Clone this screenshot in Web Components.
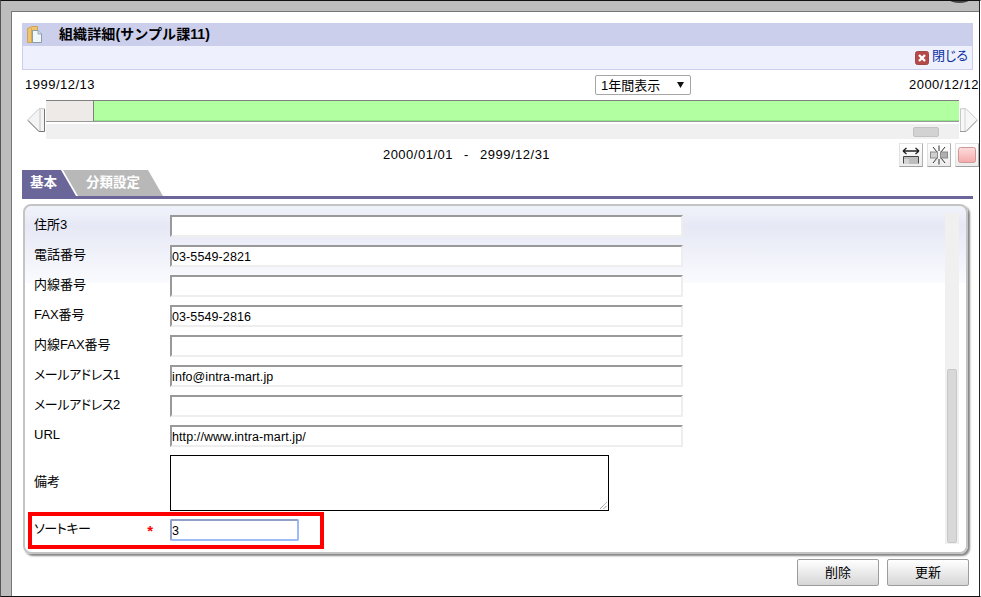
<!DOCTYPE html>
<html lang="ja">
<head>
<meta charset="utf-8">
<title>組織詳細</title>
<style>
  html, body { margin: 0; padding: 0; background: #fff; }
  body {
    font-family: "Liberation Sans", "Noto Sans CJK JP", sans-serif;
    font-size: 13px;
    color: #000;
  }
</style>
</head>
<body>

<im-window>
  <im-title-bar heading="組織詳細(サンプル課11)">閉じる</im-title-bar>
  <im-period-row from="1999/12/13" to="2000/12/12">1年間表示</im-period-row>
  <im-timeline></im-timeline>
  <im-range-row>2000/01/01 - 2999/12/31</im-range-row>
  <im-tabs></im-tabs>
  <im-form-panel>
    <im-field label="住所3"></im-field>
    <im-field label="電話番号">03-5549-2821</im-field>
    <im-field label="内線番号"></im-field>
    <im-field label="FAX番号">03-5549-2816</im-field>
    <im-field label="内線FAX番号"></im-field>
    <im-field label="メールアドレス1" tight>info@intra-mart.jp</im-field>
    <im-field label="メールアドレス2" tight></im-field>
    <im-field label="URL">http://www.intra-mart.jp/</im-field>
    <im-field label="備考" type="area"></im-field>
    <im-field label="ソートキー" type="focus" tight required>3</im-field>
  </im-form-panel>
  <im-actions>
    <im-button>削除</im-button>
    <im-button>更新</im-button>
  </im-actions>
</im-window>

<script>
  (() => {
    const cjk = '"Liberation Sans", "Noto Sans CJK JP", sans-serif';

    function define(name, css, html) {
      customElements.define(name, class extends HTMLElement {
        constructor() {
          super();
          this.root = this.attachShadow({mode: 'open'});
        }
        connectedCallback() {
          const get = (key) => this.getAttribute(key) || '';
          this.root.innerHTML = `<style>${css}</style>${html(get, this)}`;
        }
      });
    }

    define('im-window', `
      :host {
        display: block;
        box-sizing: border-box;
        position: relative;
        width: 981px;
        height: 597px;
        overflow: hidden;
        background: #bdbdbd;
        border-top: 1px solid #111;
        border-left: 1px solid #555;
        border-bottom: 1px solid #111;
        border-right: 1px solid #fff;
      }
      #notch {
        position: absolute;
        top: -4px;
        left: 949px;
        width: 19px;
        height: 6px;
        border-radius: 50%;
        background: #444;
      }
      #edge {
        position: absolute;
        top: 0;
        right: 0;
        bottom: 0;
        width: 1px;
        background: #222;
      }
      #page {
        box-sizing: border-box;
        height: 585px;
        margin: 10px 1px 0 10px;
        padding: 11px 6px 0 10px;
        background: #fff;
        border-top: 1px solid #777;
        border-left: 1px solid #777;
      }
    `, () => `<div id="page"><slot></slot></div><div id="notch"></div><div id="edge"></div>`);

    define('im-title-bar', `
      :host { display: block; }
      #head {
        display: flex;
        align-items: center;
        height: 23px;
        background: #cbcfec;
        padding-left: 5px;
      }
      #head svg { flex: none; width: 15px; height: 17px; }
      h1 {
        margin: 0 0 4px 17px;
        font: bold 14px ${cjk};
        letter-spacing: .1px;
      }
      #tools {
        box-sizing: border-box;
        display: flex;
        justify-content: flex-end;
        align-items: center;
        gap: 3px;
        height: 24px;
        padding-right: 4px;
        background: #eef1fd;
        border: solid #cbcfec;
        border-width: 0 1px 1px;
      }
      #tools svg { width: 14px; height: 14px; }
      a { color: #0a2ea0; font-size: 13px; font-feature-settings: "palt"; margin-bottom: 6px; }
    `, (get) => `
      <div id="head">
        <svg viewBox="0 0 15 17">
          <path d="M.5 2.5 L5 .5 H10.5 V13.5 L5 16.5 H.5 Z" fill="#eec46c" stroke="#c99b45" stroke-width=".8"/>
          <path d="M4.5 2 L4.5 16" stroke="#d6a850" stroke-width="1"/>
          <path d="M5.5 4.5 H11 L14.5 8 V16.5 H5.5 Z" fill="#f2f7fa" stroke="#7f96a3" stroke-width=".9"/>
          <path d="M11 4.5 V8 H14.5" fill="#c9dae3" stroke="#7f96a3" stroke-width=".7"/>
        </svg>
        <h1>${get('heading')}</h1>
      </div>
      <div id="tools">
        <svg viewBox="0 0 14 14">
          <rect x=".5" y=".5" width="13" height="13" rx="2" fill="#b64a4a" stroke="#a04848"/>
          <path d="M4 4 L10 10 M10 4 L4 10" stroke="#fff" stroke-width="2.4"/>
        </svg>
        <a><slot></slot></a>
      </div>`);

    define('im-period-row', `
      :host {
        display: grid;
        grid-template-columns: 573px 96px 1fr;
        align-items: center;
        height: 20px;
        margin: 5px -6px 0 0;
        font-size: 13px;
        letter-spacing: .5px;
      }
      #from { padding: 0 0 2px 3px; }
      #to { padding-bottom: 2px; text-align: right; white-space: nowrap; }
      #pick {
        box-sizing: border-box;
        display: flex;
        justify-content: space-between;
        align-items: center;
        height: 20px;
        padding: 0 6px 0 5px;
        background: #fff;
        border: 1px solid #a6a6a6;
        border-radius: 2px;
        letter-spacing: 0;
        font-feature-settings: "palt";
      }
      #pick span { margin-bottom: 2px; }
      #pick svg { width: 7px; height: 6px; }
    `, (get) => `
      <span id="from">${get('from')}</span>
      <div id="pick"><span><slot></slot></span><svg viewBox="0 0 7 6"><path d="M0 0 H7 L3.5 6 Z" fill="#111"/></svg></div>
      <span id="to">${get('to')}</span>`);

    define('im-timeline', `
      :host {
        display: grid;
        grid-template-columns: 19px 913px 19px;
        height: 39px;
        margin: 5px -6px 0 5px;
      }
      svg { width: 19px; height: 24px; margin-top: 8px; }
      #bars { display: flex; flex-direction: column; gap: 2px; }
      #period {
        display: flex;
        height: 22px;
        box-sizing: border-box;
        border-top: 1px solid #808080;
        border-bottom: 1px solid #999;
      }
      #before { width: 47px; background: #eeeae8; border-right: 1px solid #808080; }
      #now { flex: 1; background: #b2ffa2; border-bottom: 1px solid #8fe585; }
      #scroll {
        display: flex;
        justify-content: flex-end;
        align-items: center;
        height: 15px;
        padding-right: 20px;
        background: #f0f0f0;
      }
      #scroll div {
        width: 26px;
        height: 10px;
        background: #d2d2d2;
        border: 1px solid #c2c2c2;
        box-sizing: border-box;
        border-radius: 2px;
      }
    `, () => `
      <svg viewBox="0 0 19 24">
        <path d="M.7 12 L12 .7 H17.5 V23.5 H12 Z" fill="#f4f4f4" stroke="#c8c8c8"/>
        <path d="M13 1 V23" fill="none" stroke="#c4c4c4"/>
        <path d="M17.5 1 V23.5 H12 L1 12.5" fill="none" stroke="#777"/>
      </svg>
      <div id="bars">
        <div id="period"><div id="before"></div><div id="now"></div></div>
        <div id="scroll"><div></div></div>
      </div>
      <svg viewBox="0 0 19 24">
        <path d="M18.3 12 L7 .7 H1.5 V23.5 H7 Z" fill="#f7f7f7" stroke="#c8c8c8"/>
        <path d="M6 1 V23" fill="none" stroke="#d4d4d4"/>
        <path d="M1 23.5 H7 L18 12.5" fill="none" stroke="#999"/>
      </svg>`);

    define('im-range-row', `
      :host {
        display: flex;
        align-items: center;
        height: 24px;
        margin: 4px -6px 0 0;
        font-size: 13px;
        letter-spacing: .5px;
        word-spacing: 7px;
      }
      #text { box-sizing: border-box; width: 878px; padding: 0 0 2px 12px; text-align: center; }
      #icons { display: flex; gap: 4px; }
      .btn {
        box-sizing: border-box;
        width: 24px;
        height: 24px;
        background: linear-gradient(#fff, #ececec);
        border: 1px solid;
        border-color: #e2e2e2 #b0b0b0 #a0a0a0 #e2e2e2;
      }
      svg { display: block; width: 22px; height: 22px; }
    `, () => `
      <span id="text"><slot></slot></span>
      <div id="icons">
        <div class="btn"><svg viewBox="0 0 22 22">
          <path d="M3 7 H19 M3 7 L6.5 4 M3 7 L6.5 10 M19 7 L15.5 4 M19 7 L15.5 10" fill="none" stroke="#222" stroke-width="1.3"/>
          <path d="M3.5 19.5 V12.5 H18.5 V19.5" fill="none" stroke="#444"/>
          <rect x="4" y="13" width="14" height="7" fill="#bdbdbd"/>
          <rect x="4" y="15" width="5" height="5" fill="#d4d4d4"/>
        </svg></div>
        <div class="btn"><svg viewBox="0 0 22 22">
          <path d="M11 1.5 V7 M11 15 V20.5 M5 3 L9 8 M17 3 L13 8 M5 19 L9 14 M17 19 L13 14" fill="none" stroke="#333"/>
          <rect x="2.5" y="8" width="7" height="6" fill="#cfcfcf" stroke="#8a8a8a"/>
          <rect x="12.5" y="8" width="7" height="6" fill="#b0b0b0" stroke="#8a8a8a"/>
        </svg></div>
        <div class="btn"><svg viewBox="0 0 22 22">
          <defs><linearGradient id="pink" x1="0" y1="0" x2="0" y2="1"><stop offset="0" stop-color="#fdd"/><stop offset="1" stop-color="#f4a9a9"/></linearGradient></defs>
          <rect x="2.5" y="3.5" width="17" height="15" rx="2" fill="url(#pink)" stroke="#c99"/>
        </svg></div>
      </div>`);

    define('im-tabs', `
      :host {
        display: flex;
        height: 26px;
        margin-top: 3px;
        border-bottom: 3px solid #6a6699;
        font: bold 13.5px ${cjk};
        color: #fff;
      }
      div { display: flex; align-items: center; height: 26px; box-sizing: border-box; padding-bottom: 5px; }
      #one {
        width: 54px;
        padding-left: 8px;
        background: #6a6699;
        clip-path: polygon(0 0, 39px 0, 54px 100%, 0 100%);
      }
      #two {
        width: 100px;
        margin-left: -13px;
        padding-left: 23px;
        background: #b8b8b8;
        clip-path: polygon(0 0, 85px 0, 100px 100%, 15px 100%);
      }
    `, () => `<div id="one">基本</div><div id="two">分類設定</div>`);

    define('im-form-panel', `
      :host {
        display: block;
        box-sizing: border-box;
        position: relative;
        width: 945px;
        height: 350px;
        margin: 5px 0 0 1px;
        background: linear-gradient(#f1f3fb 0, #e6e8f5 20px, #fafbfe 77px) no-repeat;
        background-size: 100% 77px;
        border: 2px solid #c4c4c4;
        border-radius: 8px;
        box-shadow: 2px 2px 2px #858585;
      }
      #inner { display: flex; height: 100%; }
      #rows {
        display: flex;
        flex-direction: column;
        gap: 8px;
        width: 920px;
        padding: 9px 0 0 9px;
        box-sizing: border-box;
      }
      #track {
        display: flex;
        align-items: flex-end;
        justify-content: center;
        box-sizing: border-box;
        width: 14px;
        height: 331px;
        margin-top: 7px;
        padding-bottom: 1px;
        background: #f0f0f0;
      }
      #track div {
        width: 10px;
        height: 174px;
        background: #d8d8d8;
        border: 1px solid #c8c8c8;
        box-sizing: border-box;
        border-radius: 2px;
      }
      #mark {
        position: absolute;
        left: 3px;
        top: 306px;
        width: 296px;
        height: 37px;
        box-sizing: border-box;
        border: 4px solid #f00;
      }
    `, () => `
      <div id="inner">
        <div id="rows"><slot></slot></div>
        <div id="track"><div></div></div>
      </div>
      <div id="mark"></div>`);

    define('im-field', `
      :host {
        display: grid;
        grid-template-columns: 136px auto;
        align-items: center;
        font-size: 13px;
      }
      #label {
        display: flex;
        justify-content: space-between;
        align-items: center;
        padding: 0 17px 2px 0;
        line-height: 20px;
        font-feature-settings: "palt";
        white-space: nowrap;
      }
      #label.tight span:first-child { letter-spacing: -.4px; }
      #star { color: #f00; font-weight: bold; font-size: 15px; line-height: 12px; margin-top: 3px; }
      #box {
        position: relative;
        box-sizing: border-box;
        height: 22px;
        width: 513px;
        padding: 1px 0 0;
        display: flex;
        align-items: center;
        font-size: 12.5px;
        letter-spacing: .1px;
        background: #fff;
        border: 2px solid;
        border-color: #999 #eee #eee #999;
      }
      #box.area { width: 439px; height: 56px; border: 1px solid #000; }
      #box.focus {
        width: 129px;
        border-radius: 2px;
        border-color: #8f9fc8 #9cbcf5 #9cbcf5 #8f9fc8;
      }
      #grip { position: absolute; right: 1px; bottom: 1px; width: 7px; height: 7px; }
    `, (get, el) => `
      <div id="label" class="${el.hasAttribute('tight') ? 'tight' : ''}"><span>${get('label')}</span>${el.hasAttribute('required') ? '<span id="star">*</span>' : ''}</div>
      <div id="box" class="${get('type')}" role="textbox"><slot></slot>${get('type') === 'area' ? '<svg id="grip" viewBox="0 0 7 7"><path d="M0 7 L7 0 M3.5 7 L7 3.5" stroke="#777" stroke-width="1" stroke-dasharray="1 .6"/></svg>' : ''}</div>`);

    define('im-actions', `
      :host {
        display: flex;
        justify-content: flex-end;
        gap: 8px;
        margin-top: 5px;
        padding-right: 4px;
      }
    `, () => `<slot></slot>`);

    define('im-button', `
      :host {
        display: flex;
        align-items: center;
        justify-content: center;
        box-sizing: border-box;
        width: 82px;
        height: 27px;
        padding-bottom: 2px;
        font-size: 13px;
        background: linear-gradient(#fff, #d6d6d6);
        border: 1px solid #9c9c9c;
        border-radius: 2px;
      }
    `, () => `<slot></slot>`);
  })();
</script>
</body>
</html>
